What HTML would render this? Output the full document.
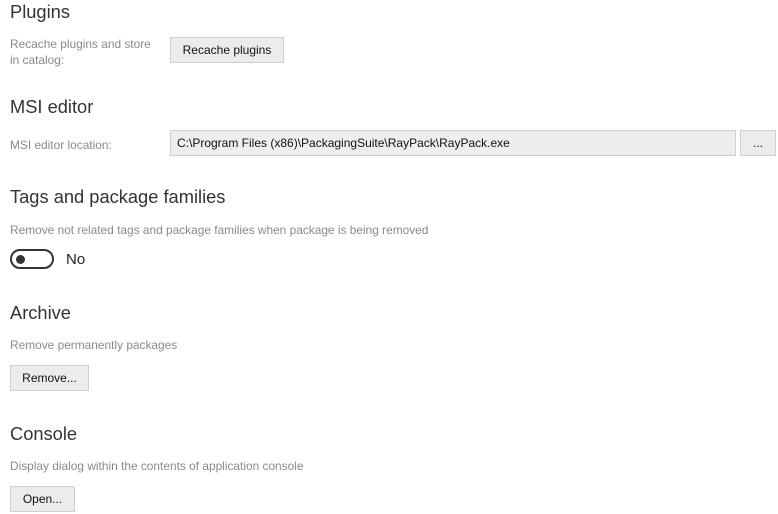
<!DOCTYPE html><html><head><style>
body{margin:0;width:778px;height:514px;background:#fff;font-family:"Liberation Sans",sans-serif;position:relative;overflow:hidden}
.a{position:absolute;white-space:nowrap}
h{position:absolute;font-size:18.3px;color:#333;left:10px;white-space:nowrap}
.l{position:absolute;font-size:11.9px;color:#8a8a8a;left:10px;white-space:nowrap}
.b{position:absolute;background:#ececec;border:1px solid #cfcfcf;box-sizing:border-box;font-size:12px;color:#111;text-align:center}
</style></head><body>
<h style="top:1px">Plugins</h>
<div class="l" style="top:36px;line-height:16px">Recache plugins and store<br>in catalog:</div>
<div class="b" style="left:170px;top:37px;width:114px;height:26px;line-height:24px">Recache plugins</div>
<h style="top:96px">MSI editor</h>
<div class="l" style="top:138px">MSI editor location:</div>
<div class="b" style="left:170px;top:130px;width:566px;height:26px;line-height:24px;text-align:left;padding-left:6px;background:#eee;border-width:1.5px">C:\Program Files (x86)\PackagingSuite\RayPack\RayPack.exe</div>
<div class="b" style="left:740px;top:130px;width:36px;height:26px;line-height:24px">...</div>
<h style="top:186px">Tags and package families</h>
<div class="l" style="top:223px">Remove not related tags and package families when package is being removed</div>
<div class="a" style="left:10px;top:249px;width:44px;height:20px;border:2px solid #333;border-radius:12px;box-sizing:border-box"></div>
<div class="a" style="left:16px;top:255px;width:9px;height:9px;border-radius:50%;background:#333"></div>
<div class="a" style="left:66px;top:251px;font-size:15px;color:#222">No</div>
<h style="top:302px">Archive</h>
<div class="l" style="top:338px">Remove permanently packages</div>
<div class="b" style="left:10px;top:365px;width:79px;height:26px;line-height:24px">Remove...</div>
<h style="top:423px">Console</h>
<div class="l" style="top:459px">Display dialog within the contents of application console</div>
<div class="b" style="left:10px;top:486px;width:65px;height:26px;line-height:24px">Open...</div>
</body></html>
